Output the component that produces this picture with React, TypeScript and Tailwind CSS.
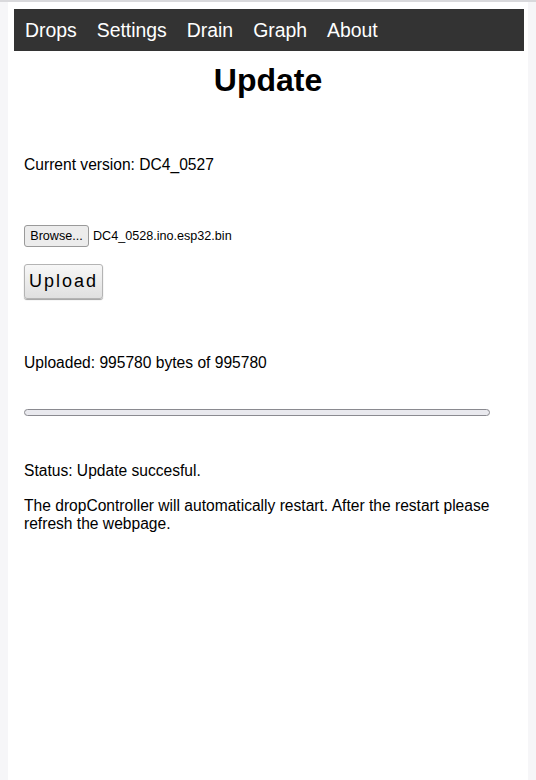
const navItems = ["Drops", "Settings", "Drain", "Graph", "About"];

export default function App() {
  return (
    <div
      className="min-h-[780px] border-t-2 border-[#d9d9dc] bg-[#f6f6f8] text-black"
      style={{ fontFamily: '"Liberation Sans", Arial, sans-serif' }}
    >
      <div className="ml-2 min-h-[778px] w-[520px] bg-white pt-[7px]">
        <nav className="ml-[6px] mr-[4px] flex h-[42px] items-center gap-[20px] bg-[#333333] pl-[11px] pt-[2px] text-[19.4px] text-white">
          {navItems.map((item) => (
            <a key={item} className="leading-none">
              {item}
            </a>
          ))}
        </nav>

        <main className="px-4 text-[15.6px]">
          <h1 className="mt-[11px] text-center text-[32px] font-bold leading-[37px]">
            Update
          </h1>

          <p className="mt-[57px] leading-[18px]">Current version: DC4_0527</p>

          <div className="mt-[51px] flex h-[22px] items-center gap-1 text-[12.6px]">
            <button className="h-[22px] w-[65px] rounded-[3px] border border-[#9a9a9a] bg-[#ececec] text-[12.6px] text-black">
              Browse...
            </button>
            <span>DC4_0528.ino.esp32.bin</span>
          </div>

          <button className="mt-[17px] h-[35px] w-[79px] rounded-[3px] border border-[#b4b4b4] bg-gradient-to-b from-[#f7f7f7] to-[#e0e0e0] text-[18px] tracking-[2px] text-black shadow-[0_1px_1px_#a0a0a0]">
            Upload
          </button>

          <p className="mt-[55px] leading-[18px]">Uploaded: 995780 bytes of 995780</p>

          <div className="mt-[37px] h-[7px] w-[466px] rounded-full border border-[#8a8a90] bg-[#e9e9ee]" />

          <p className="mt-[46px] leading-[18px]">Status: Update succesful.</p>

          <p className="mt-[17px] leading-[18px]">
            The dropController will automatically restart. After the restart please refresh the
            webpage.
          </p>
        </main>
      </div>
    </div>
  );
}
